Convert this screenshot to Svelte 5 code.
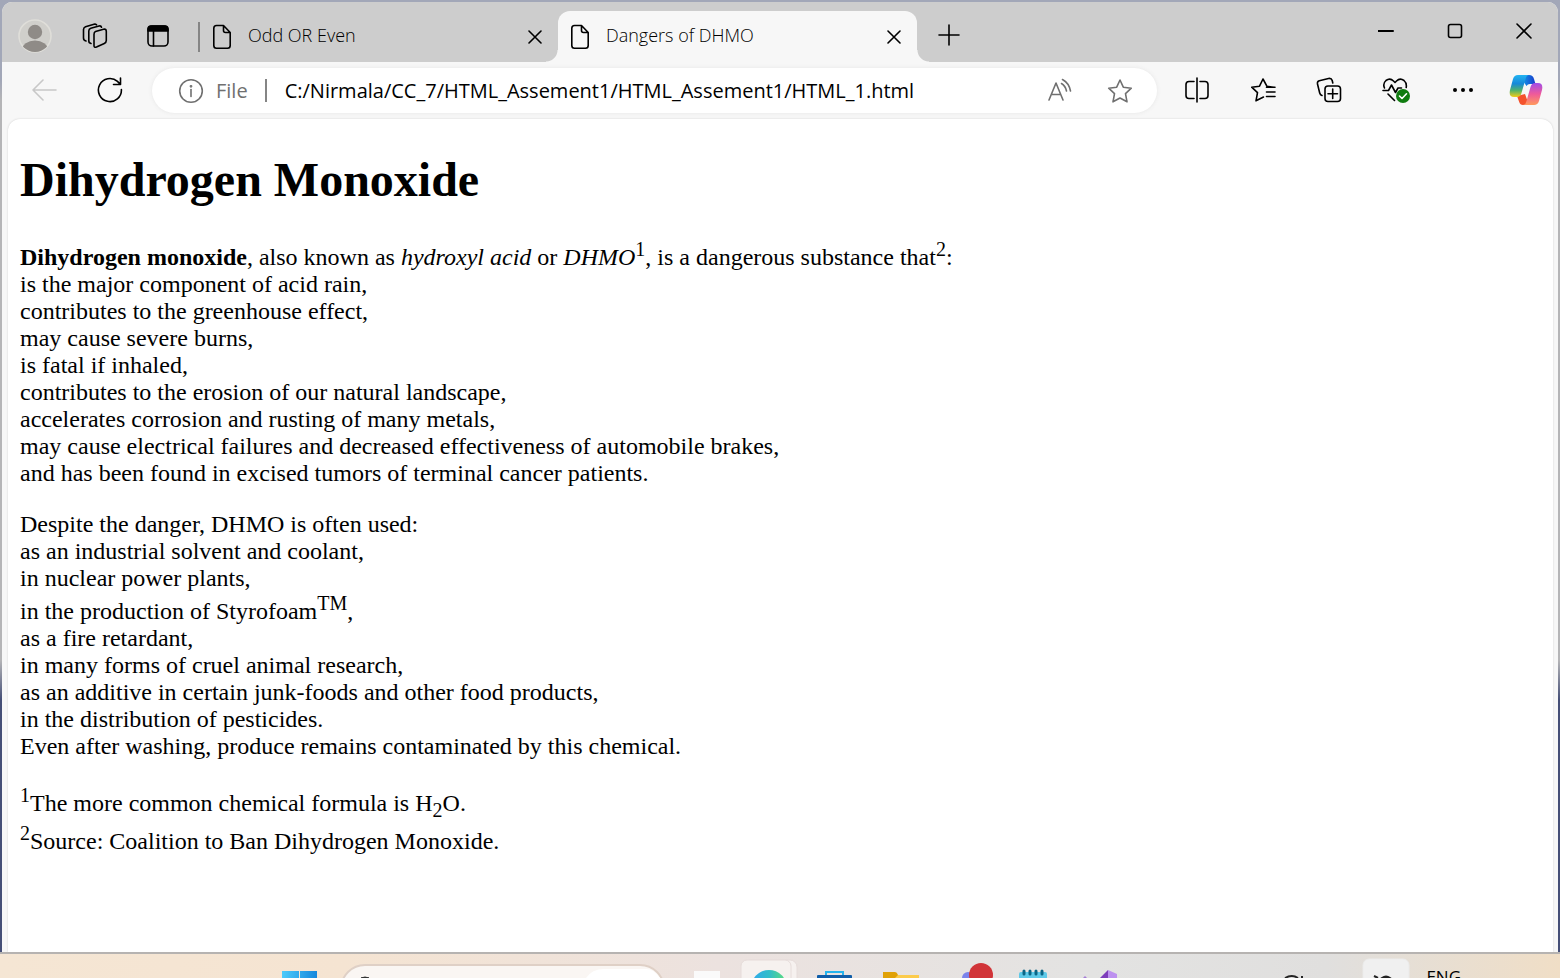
<script>
  const effects = [
    'is the major component of acid rain,',
    'contributes to the greenhouse effect,',
    'may cause severe burns,',
    'is fatal if inhaled,',
    'contributes to the erosion of our natural landscape,',
    'accelerates corrosion and rusting of many metals,',
    'may cause electrical failures and decreased effectiveness of automobile brakes,',
    'and has been found in excised tumors of terminal cancer patients.'
  ];
  let address = $state('C:/Nirmala/CC_7/HTML_Assement1/HTML_Assement1/HTML_1.html');
</script>

{#snippet fileIcon()}
  <svg class="file" width="20" height="26" viewBox="0 0 20 26" aria-hidden="true">
    <path d="M11.500 1.500H4.500Q1.800 1.500 1.800 4.200V21.500Q1.800 24.200 4.500 24.200H15.500Q18.200 24.200 18.200 21.500V8.500ZM11.500 1.500V6.500Q11.500 8.500 13.500 8.500H18.200" />
  </svg>
{/snippet}

{#snippet closeIcon()}
  <svg width="14" height="14" viewBox="0 0 14 14" aria-hidden="true"><path d="M1 1L13 13M13 1L1 13" /></svg>
{/snippet}

<div class="desktop">
  <div class="window">
    <header class="tabbar">
      <div class="tools">
        <button aria-label="Profile">
          <svg width="34" height="34" viewBox="0 0 34 34">
            <defs><clipPath id="face"><circle cx="17" cy="17" r="16" /></clipPath></defs>
            <circle cx="17" cy="17" r="16" fill="#d0cfcb" style:stroke="#dfded9" />
            <g clip-path="url(#face)" class="solid" fill="#8f8b87"><circle cx="17" cy="13" r="7.200" fill="#8f8b87" /><ellipse cx="17" cy="31" rx="13" ry="9.500" fill="#8f8b87" /></g>
          </svg>
        </button>
        <button aria-label="Workspaces">
          <svg width="26" height="26" viewBox="0 0 26 26">
            <path d="M13.500 8.500L21.500 6.300Q24.300 5.600 24.300 8.500V17.500Q24.300 19.600 22.300 20.500L14.500 24Q12 25 12 22.500V11.500Q12 9 13.500 8.500ZM9 20.500Q6.800 20 6.800 18V8Q6.800 6 8.800 5.300L17 3Q19 2.500 19.500 4.200M4 18Q1.500 17.500 1.500 15V6.500Q1.500 4.500 3.500 3.700L12 1.200Q13.500 .8 14.500 1.800" />
          </svg>
        </button>
        <button aria-label="Tab actions">
          <svg width="22" height="22" viewBox="0 0 22 22">
            <rect x="1" y="1" width="20" height="20" rx="4" /><path d="M1 6V4Q1 1 4 1H18Q21 1 21 4V6Z" fill="#000" /><path d="M6.500 6V21" />
          </svg>
        </button>
      </div>
      <nav class="tabs" aria-label="Tabs">
        <div class="tab idle">
          {@render fileIcon()}
          <a href="#odd">Odd OR Even</a>
          <button aria-label="Close Odd OR Even">{@render closeIcon()}</button>
        </div>
        <div class="tab active">
          {@render fileIcon()}
          <a href="#dhmo">Dangers of DHMO</a>
          <button aria-label="Close Dangers of DHMO">{@render closeIcon()}</button>
        </div>
        <button class="new" aria-label="New tab">
          <svg width="22" height="22" viewBox="0 0 22 22"><path d="M11 1V21M1 11H21" /></svg>
        </button>
      </nav>
      <div class="controls">
        <button aria-label="Minimize"><svg width="16" height="16" viewBox="0 0 16 16"><path d="M0 8H15" stroke-width="2" /></svg></button>
        <button aria-label="Maximize"><svg width="16" height="16" viewBox="0 0 16 16"><rect x="1.500" y="1.500" width="13" height="13" rx="2" /></svg></button>
        <button aria-label="Close"><svg width="16" height="16" viewBox="0 0 16 16"><path d="M1 1L15 15M15 1L1 15" /></svg></button>
      </div>
    </header>

    <div class="toolbar">
      <button class="back" aria-label="Back" disabled>
        <svg width="26" height="22" viewBox="0 0 26 22"><path d="M25 11H2M12 1L2 11L12 21" /></svg>
      </button>
      <button class="refresh" aria-label="Refresh">
        <svg width="26" height="26" viewBox="0 0 26 26"><path d="M24.400 12.500A11.500 11.500 0 1 1 20.500 4.400L23.200 7.200M23.500 1V7.500H16.500" /></svg>
      </button>
      <div class="address">
        <button class="info" aria-label="View site information">
          <svg width="26" height="26" viewBox="0 0 26 26"><circle cx="13" cy="13" r="11.300" /><path d="M13 11.500V18.500" /><circle cx="13" cy="8.300" r=".6" /></svg>
        </button>
        <label for="url">File</label>
        <input id="url" type="text" spellcheck="false" bind:value={address} />
        <button aria-label="Read aloud">
          <svg width="26" height="26" viewBox="0 0 26 26"><path d="M2 22L9 5L16 22M4.500 16.500H13.500M14.500 5.500Q18.500 8 19.500 13M15.500 1.500Q22 5 23.500 13" /></svg>
        </button>
        <button aria-label="Add to favorites">
          <svg width="26" height="26" viewBox="0 0 26 26"><path d="M13 2L16.300 9.200L24.300 10.200L18.500 15.700L20 23.800L13 20L6 23.800L7.500 15.700L1.700 10.200L9.700 9.200Z" /></svg>
        </button>
      </div>
      <div class="actions">
        <button aria-label="Split screen">
          <svg width="26" height="26" viewBox="0 0 26 26"><path d="M10 4.500H5Q2 4.500 2 7.500V18.500Q2 21.500 5 21.500H10M16 4.500H21Q24 4.500 24 7.500V18.500Q24 21.500 21 21.500H16M13 1V25" /></svg>
        </button>
        <button aria-label="Favorites">
          <svg width="26" height="26" viewBox="0 0 26 26"><path d="M24 10.200L17 9.300L13 2L9.500 9.200L1.700 10.200L7.500 15.700L6 23.800L13.500 20M16.500 10.200H25M16.500 15H25M16.500 19.500H25" /></svg>
        </button>
        <button aria-label="Collections">
          <svg width="26" height="26" viewBox="0 0 26 26"><rect x="9" y="9" width="15.500" height="15.500" rx="3" /><path d="M16.700 12V21.500M12 16.700H21.500M6 18.500Q4.200 18 3.700 16L1.500 7Q1 4.500 3.300 3.800L12.500 1.500Q15.500 1 16.200 3.500L16.800 6" /></svg>
        </button>
        <button aria-label="Browser essentials">
          <svg width="28" height="26" viewBox="0 0 28 26"><path d="M2.500 11Q.5 6.500 4 3.500Q8 .5 11.500 4L13 5.500L14.500 4Q18 .5 22 3.500Q25 6 24.200 10.500M1 13.500H6.500L9.500 8L13.500 15.500L16 11H19.500M6 17L12.500 23.500" /><circle class="solid" cx="21" cy="19" r="7" fill="#107c10" /><path class="tick" d="M17.500 19L20 21.500L24.500 16.800" /></svg>
        </button>
        <button aria-label="Settings and more">
          <svg width="26" height="26" viewBox="0 0 26 26"><g class="solid" fill="#000"><circle cx="5" cy="13" r="2" /><circle cx="13" cy="13" r="2" /><circle cx="21" cy="13" r="2" /></g></svg>
        </button>
        <button class="copilot" aria-label="Copilot">
          <svg width="34" height="32" viewBox="0 0 34 32">
            <defs>
              <linearGradient id="cool" x1="0" y1="0" x2="0" y2="1"><stop offset="0" stop-color="#22b4f2" /><stop offset=".4" stop-color="#1788d8" /><stop offset=".7" stop-color="#51b26b" /><stop offset="1" stop-color="#f4cd16" /></linearGradient>
              <linearGradient id="warm" x1="0" y1="0" x2="0" y2="1"><stop offset="0" stop-color="#a04de8" /><stop offset=".5" stop-color="#ef5a9a" /><stop offset="1" stop-color="#ff9a5c" /></linearGradient>
              <linearGradient id="fold" x1="0" y1="0" x2="1" y2="0"><stop offset="0" stop-color="#1494e8" /><stop offset="1" stop-color="#173bcb" /></linearGradient>
            </defs>
            <g class="solid">
              <path d="M15 1H20Q24 1 25 5L26.500 10H21Q18.500 10 17.500 12L14 7Z" fill="url(#fold)" />
              <path d="M8 22L16 20L20 31H14Q11 31 10.200 28Z" fill="#f4522d" />
              <path d="M9 1H20Q17.500 1 16.500 5L12.500 19Q11.500 23 7.500 23H5Q-.5 23 1 16L4 5Q5.200 1 9 1Z" fill="url(#cool)" />
              <path d="M25 31H14Q16.500 31 17.500 27L21.500 13Q22.500 9 26.500 9H29Q34.500 9 33 16L30 27Q28.800 31 25 31Z" fill="url(#warm)" />
            </g>
          </svg>
        </button>
      </div>
    </div>

    <main>
      <h1>Dihydrogen Monoxide</h1>
      <p>
        <b>Dihydrogen monoxide</b>, also known as <i>hydroxyl acid</i> or <i>DHMO</i><sup>1</sup>, is a dangerous substance that<sup>2</sup>:
        {#each effects as line}<br />{line}{/each}
      </p>
      <p>
        Despite the danger, DHMO is often used:<br />
        as an industrial solvent and coolant,<br />
        in nuclear power plants,<br />
        in the production of Styrofoam<sup>TM</sup>,<br />
        as a fire retardant,<br />
        in many forms of cruel animal research,<br />
        as an additive in certain junk-foods and other food products,<br />
        in the distribution of pesticides.<br />
        Even after washing, produce remains contaminated by this chemical.
      </p>
      <p>
        <sup>1</sup>The more common chemical formula is H<sub>2</sub>O.<br />
        <sup>2</sup>Source: Coalition to Ban Dihydrogen Monoxide.
      </p>
    </main>
  </div>

  <footer class="taskbar">
    <div class="apps">
      <svg width="59" height="24" viewBox="0 0 59 24" aria-hidden="true"><defs><linearGradient id="win"><stop offset="0" stop-color="#4ccbfb" /><stop offset="1" stop-color="#1687dc" /></linearGradient></defs><path d="M1 17H18V24H1ZM19 17H36V24H19Z" fill="url(#win)" /></svg>
      <svg width="333" height="24" viewBox="0 0 333 24" aria-hidden="true"><rect x="1" y="11" width="323" height="48" rx="24" fill="#faf6f3" stroke="#dfd0c6" stroke-width="2" /><path d="M246 24Q252 15 264 15H306Q314 15 320 24Z" fill="#fff" /><path d="M21 24Q25 22 29 24Z" fill="#333" stroke="#333" /></svg>
      <svg width="66" height="24" viewBox="-21 0 66 24" aria-hidden="true"><path d="M0 17H26V24H0Z" fill="#fafafa" /></svg>
      <svg width="66" height="24" viewBox="-1 0 66 24" aria-hidden="true"><rect x="5" y="6" width="52" height="50" rx="7" fill="#f6f1ef" stroke="#e6dcda" /><rect x="1" y="6" width="50" height="50" rx="6" fill="#f6f1ef" stroke="#e6dcda" /><defs><linearGradient id="sea"><stop offset="0" stop-color="#2fa8ee" /><stop offset=".5" stop-color="#31bdc9" /><stop offset="1" stop-color="#5fdf78" /></linearGradient></defs><circle cx="29" cy="34" r="18" fill="url(#sea)" /></svg>
      <svg width="66" height="24" viewBox="-12 0 66 24" aria-hidden="true"><path d="M9 22V18H26V22" fill="none" stroke="#25b4ee" stroke-width="2" /><path d="M0 24V22Q0 21 1 21H34Q35 21 35 22V24Z" fill="#0f5da8" /></svg>
      <svg width="66" height="24" viewBox="-12 0 66 24" aria-hidden="true"><path d="M10 21H36V24H0V22Z" fill="#fccb4b" /><path d="M0 18H12Q14 18 15 21L12 24H0Z" fill="#e0a106" /></svg>
      <svg width="66" height="24" viewBox="-25 0 66 24" aria-hidden="true"><circle cx="6" cy="24" r="6" fill="#7b83eb" /><circle cx="19" cy="21" r="12" fill="#d13438" /></svg>
      <svg width="66" height="24" viewBox="-16 0 66 24" aria-hidden="true"><path d="M0 24V20Q0 18 2 18H26Q28 18 28 20V24Z" fill="#5fc9e8" /><path d="M5 17V20M11 17V20M17 17V20M23 17V20" stroke="#0b6585" stroke-width="3" stroke-linecap="round" /></svg>
      <svg width="66" height="24" viewBox="-14 0 66 24" aria-hidden="true"><path d="M0 24L2 22L4 24Z" fill="#a67fd6" /><path d="M17 24L25 16L26 24Z" fill="#7d3cbb" /><path d="M25 16L34 20V24H25Z" fill="#bd91ef" /></svg>
    </div>
    <div class="tray">
      <svg width="20" height="24" viewBox="0 0 20 24" aria-hidden="true"><path d="M1 24Q8 20 14 24M18 22V24" fill="none" stroke="#222" stroke-width="2" /></svg>
      <svg width="48" height="24" viewBox="0 0 48 24" aria-hidden="true"><rect x="1" y="5" width="46" height="48" rx="6" fill="#f0f0f0" stroke="#ebebeb" /><path d="M12 22L16 24M20 24Q24 21 28 24Z" fill="#222" stroke="#222" stroke-width="2" /></svg>
      <span>ENG</span>
    </div>
  </footer>
</div>

<style>
  :global(body) { margin: 0; }
  .desktop {
    min-height: 100vh;
    display: flex;
    flex-direction: column;
    box-sizing: border-box;
    background: linear-gradient(#a2a7b8 0 80px, #b5b5b7 100px 660px, #454f77 700px);
  }
  .window {
    flex: 1;
    display: flex;
    flex-direction: column;
    margin: 2px 2px 0;
    overflow: hidden;
    background: #f7f7f7;
    border-radius: 10px 10px 0 0;
  }
  button {
    border: 0;
    padding: 0;
    background: none;
    display: flex;
    align-items: center;
    justify-content: center;
    flex: none;
  }
  svg { display: block; flex: none; }
  .window svg {
    fill: none;
    stroke: #000;
    stroke-width: 1.6;
    stroke-linejoin: round;
    stroke-linecap: round;
  }
  .window svg .solid { stroke: none; }
  .window svg .tick { stroke: #fff; }
  .tabbar {
    display: flex;
    height: 60px;
    background: #cdcdcd;
    font: 300 18px "Open Sans", "Noto Sans", sans-serif;
  }
  .tools {
    display: flex;
    align-items: center;
    gap: 30px;
    padding: 8px 0 0 16px;
  }
  .tools button:nth-child(3) { margin-left: 9px; }
  .tabs { display: flex; flex: 1; padding-top: 9px; }
  .tab {
    position: relative;
    display: flex;
    align-items: center;
    flex: 0 1 359px;
    box-sizing: border-box;
    padding: 0 16px 0 12px;
  }
  .tab a {
    flex: 1;
    margin-left: 16px;
    padding-bottom: 3px;
    color: #000;
    text-decoration: none;
    white-space: nowrap;
  }
  .tab.idle { flex-basis: 360px; margin-left: 29px; }
  .idle::before {
    content: "";
    width: 2px;
    height: 30px;
    margin: 0 12px 0 -12px;
    background: #858585;
  }
  .active { background: #f7f7f7; border-radius: 12px 12px 0 0; }
  .active::before, .active::after {
    content: "";
    position: absolute;
    bottom: 0;
    width: 12px;
    height: 12px;
  }
  .active::before { right: 100%; background: radial-gradient(circle at 0 0, #cdcdcd 11px, #f7f7f7 12px); }
  .active::after { left: 100%; background: radial-gradient(circle at 100% 0, #cdcdcd 11px, #f7f7f7 12px); }
  .new { margin-left: 21px; padding-bottom: 3px; }
  .controls { display: flex; gap: 53px; padding: 0 26px 2px 0; }
  .toolbar {
    display: flex;
    align-items: center;
    height: 57px;
    padding: 0 15px 0 29px;
    font: 20px "Open Sans", "Noto Sans", sans-serif;
  }
  .back, .refresh, .actions { padding-bottom: 2px; }
  .back { margin-right: 40px; }
  .window .back svg { stroke: #c8c8c8; }
  .address {
    display: flex;
    align-items: center;
    flex: 1;
    height: 45px;
    margin: 0 27px 0 29px;
    padding: 0 24px 0 26px;
    border-radius: 23px;
    background: #fff;
    box-shadow: 0 0 4px #e6e6e6;
  }
  .window .address svg { stroke: #707070; }
  .address label {
    margin-left: 12px;
    padding-right: 17px;
    border-right: 2px solid #858585;
    line-height: 23px;
    color: #707070;
  }
  .address input {
    flex: 1;
    min-width: 0;
    border: 0;
    padding: 0 0 0 18px;
    font: inherit;
    color: #000;
    background: none;
    outline: 0;
  }
  .address button + button { margin-left: 34px; }
  .actions { display: flex; align-items: center; gap: 40px; }
  .actions .copilot { margin-left: -7px; }
  main {
    flex: 1;
    margin: 0 5px 0 6px;
    padding: 0 12px;
    background: #fff;
    border-radius: 12px 12px 0 0;
    box-shadow: 0 0 2px #ccc;
    font: 24px/27px "Liberation Serif", serif;
    color: #000;
  }
  h1 { margin: 33px 0 31px; font-size: 48px; line-height: 55px; }
  p { margin: 0 0 24px; }
  sup, sub { font-size: 20px; line-height: 23px; }
  .taskbar {
    display: flex;
    justify-content: space-between;
    height: 24px;
    overflow: hidden;
    border-top: 2px solid #b6b3b1;
    background: linear-gradient(90deg, #f5e6d4, #f5e4d2 22%, #ece2df 46%, #e3e3e2 70%, #e0dfde 85%, #f0dec6);
  }
  .apps { display: flex; padding-left: 281px; }
  .tray { display: flex; padding-right: 99px; font: 17px "Open Sans", sans-serif; }
  .tray svg + svg { margin: 0 16px 0 58px; }
  .tray span { padding-top: 11px; }
</style>
